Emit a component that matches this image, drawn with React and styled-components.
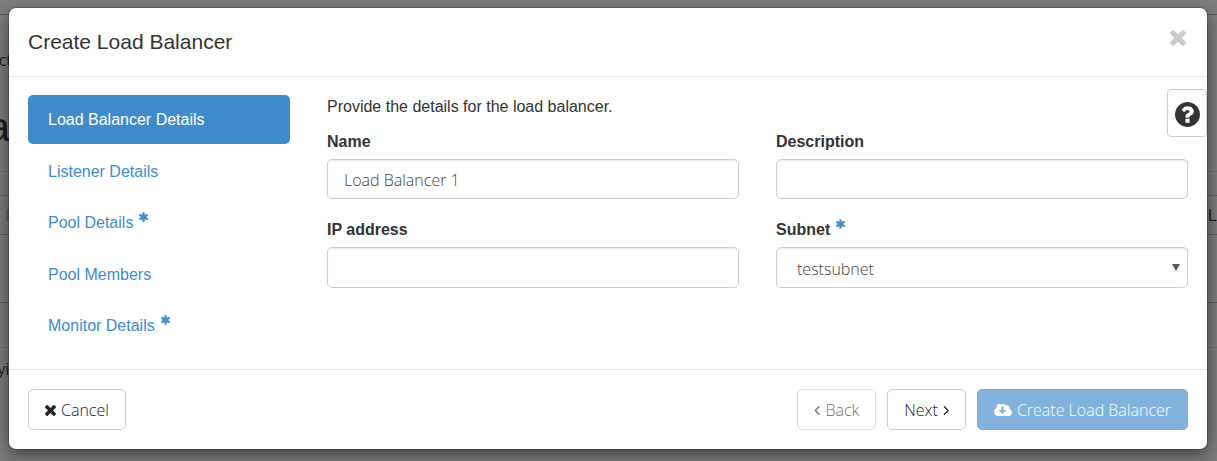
import React, { useState } from "react";
import styled, { createGlobalStyle } from "styled-components";

const ICONS = {
  times: {
    box: "302 366 1188 1188",
    d: "M1490 1322q0 40-28 68l-136 136q-28 28-68 28t-68-28l-294-294-294 294q-28 28-68 28t-68-28l-136-136q-28-28-28-68t28-68l294-294-294-294q-28-28-28-68t28-68l136-136q28-28 68-28t68 28l294 294 294-294q28-28 68-28t68 28l136 136q28 28 28 68t-28 68l-294 294 294 294q28 28 28 68z",
  },
  asterisk: {
    box: "178 128 1436 1536",
    d: "M1546 1050q46 26 59.5 77.5t-12.5 97.5l-64 110q-26 46-77.5 59.5t-97.5-12.5l-266-153v307q0 52-38 90t-90 38h-128q-52 0-90-38t-38-90v-307l-266 153q-46 26-97.5 12.5t-77.5-59.5l-64-110q-26-46-12.5-97.5t59.5-77.5l266-154-266-154q-46-26-59.5-77.5t12.5-97.5l64-110q26-46 77.5-59.5t97.5 12.5l266 153v-307q0-52 38-90t90-38h128q52 0 90 38t38 90v307l266-153q46-26 97.5-12.5t77.5 59.5l64 110q26 46 12.5 97.5t-59.5 77.5l-266 154z",
  },
  question: {
    box: "128 128 1536 1536",
    d: "M1024 1376v-192q0-14-9-23t-23-9h-192q-14 0-23 9t-9 23v192q0 14 9 23t23 9h192q14 0 23-9t9-23zm256-672q0-88-55.5-163t-138.5-116-170-41q-243 0-371 213-15 24 8 42l132 100q7 6 19 6 16 0 25-12 53-68 86-92 34-24 86-24 48 0 85.5 26t37.5 59q0 38-20 61t-68 45q-63 28-115.5 86.5t-52.5 125.5v36q0 14 9 23t23 9h192q14 0 23-9t9-23q0-19 21.5-49.5t54.5-49.5q32-18 49-28.5t46-35 44.5-48 28-60.5 12.5-81zm384 192q0 209-103 385.5t-279.5 279.5-385.5 103-385.5-103-279.5-279.5-103-385.5 103-385.5 279.5-279.5 385.5-103 385.5 103 279.5 279.5 103 385.5z",
  },
  cloud: {
    box: "-64 256 1920 1280",
    d: "M1216 928q0-14-9-23t-23-9h-224v-352q0-13-9.5-22.5t-22.5-9.5h-192q-13 0-22.5 9.5t-9.5 22.5v352h-224q-13 0-22.5 9.5t-9.5 22.5q0 14 9 23l352 352q9 9 23 9t23-9l351-351q10-12 10-24zm640 224q0 159-112.5 271.5t-271.5 112.5h-1088q-185 0-316.5-131.5t-131.5-316.5q0-130 70-240t188-165q-2-30-2-43 0-212 150-362t362-150q156 0 285.5 87t188.5 231q71-62 166-62 106 0 181 75t75 181q0 76-41 138 130 31 213.5 135.5t83.5 238.5z",
  },
  left: {
    box: "571 461 632 998",
    d: "M1203 544q0 13-10 23l-393 393 393 393q10 10 10 23t-10 23l-50 50q-10 10-23 10t-23-10l-466-466q-10-10-10-23t10-23l466-466q10-10 23-10t23 10l50 50q10 10 10 23z",
  },
  right: {
    box: "539 461 632 998",
    d: "M1171 960q0 13-10 23l-466 466q-10 10-23 10t-23-10l-50-50q-10-10-10-23t10-23l393-393-393-393q-10-10-10-23t10-23l50-50q10-10 23-10t23 10l466 466q10 10 10 23z",
  },
};

function Icon({ name, width, height }) {
  return (
    <Glyph
      viewBox={ICONS[name].box}
      width={width}
      height={height}
      aria-hidden="true"
    >
      <path d={ICONS[name].d} />
    </Glyph>
  );
}

function Required() {
  return (
    <Star>
      <Icon name="asterisk" width={9} height={10} />
    </Star>
  );
}

const steps = [
  { label: "Load Balancer Details" },
  { label: "Listener Details" },
  { label: "Pool Details", required: true },
  { label: "Pool Members" },
  { label: "Monitor Details", required: true },
];

export default function App() {
  const [step, setStep] = useState(0);
  const [form, setForm] = useState({
    name: "Load Balancer 1",
    description: "",
    ip: "",
    subnet: "testsubnet",
  });

  function change(event) {
    setForm({ ...form, [event.target.name]: event.target.value });
  }

  return (
    <>
      <GlobalStyle />
      <Page>
        <Backdrop aria-hidden="true">
          <Band $height={15} />
          <Band $height={157} $light>
            <Crumb>ct</Crumb>
            <Heading>a</Heading>
          </Band>
          <Band $height={24} />
          <Band $height={39}>
            <TableRow>
              <Tick />
              <span>L</span>
            </TableRow>
          </Band>
          <Band $height={68} />
          <Band $height={45} $light />
          <Note>yi</Note>
        </Backdrop>
        <Dialog role="dialog" aria-labelledby="title">
          <Header>
            <Title id="title">Create Load Balancer</Title>
            <Close type="button" aria-label="Close">
              <Icon name="times" width={16} height={16} />
            </Close>
          </Header>
          <Body>
            <Steps>
              {steps.map((item, index) => (
                <Step
                  key={item.label}
                  href="#"
                  $active={index === step}
                  onClick={(event) => {
                    event.preventDefault();
                    setStep(index);
                  }}
                >
                  {item.label}
                  {item.required && <Required />}
                </Step>
              ))}
            </Steps>
            <Content>
              <Intro>Provide the details for the load balancer.</Intro>
              <Fields>
                <Field>
                  <Label htmlFor="name">Name</Label>
                  <Input
                    id="name"
                    name="name"
                    value={form.name}
                    onChange={change}
                  />
                </Field>
                <Field>
                  <Label htmlFor="description">Description</Label>
                  <Input
                    id="description"
                    name="description"
                    value={form.description}
                    onChange={change}
                  />
                </Field>
                <Field>
                  <Label htmlFor="ip">IP address</Label>
                  <Input id="ip" name="ip" value={form.ip} onChange={change} />
                </Field>
                <Field>
                  <Label htmlFor="subnet">
                    Subnet
                    <Required />
                  </Label>
                  <SelectWrap>
                    <Select
                      id="subnet"
                      name="subnet"
                      value={form.subnet}
                      onChange={change}
                    >
                      <option>testsubnet</option>
                    </Select>
                    <Caret viewBox="0 0 8 7" width="8" height="7">
                      <path d="M0 0h8L4 7z" />
                    </Caret>
                  </SelectWrap>
                </Field>
              </Fields>
            </Content>
          </Body>
          <Help type="button" aria-label="Help">
            <Icon name="question" width={25} height={25} />
          </Help>
          <Footer>
            <Button type="button">
              <Icon name="times" width={11} height={11} />
              Cancel
            </Button>
            <Actions>
              <Button type="button" disabled>
                <Icon name="left" width={6} height={9} />
                Back
              </Button>
              <Button type="button">
                Next
                <Icon name="right" width={6} height={9} />
              </Button>
              <Button type="button" $primary disabled>
                <Icon name="cloud" width={18} height={12} />
                Create Load Balancer
              </Button>
            </Actions>
          </Footer>
        </Dialog>
      </Page>
    </>
  );
}

const GlobalStyle = createGlobalStyle`
  * {
    box-sizing: border-box;
  }
  body {
    margin: 0;
    background: #7d7d7d;
    color: #333;
    font-family: "Liberation Sans", Arial, sans-serif;
    font-size: 16px;
    line-height: 23px;
  }
`;

const Page = styled.div`
  position: relative;
  min-height: 100vh;
  padding: 8px 10px 12px 9px;
  overflow: hidden;
`;

/* dimmed page that shows round the dialog */
const Backdrop = styled.div`
  position: absolute;
  inset: 0;
  color: #1a1a1a;
`;

const Band = styled.div`
  height: ${(props) => props.$height}px;
  border-bottom: 1px solid ${(props) => (props.$light ? "#6c6c6c" : "#5c5c5c")};
`;

const Crumb = styled.div`
  display: flex;
  justify-content: flex-end;
  width: 12px;
  padding-top: 34px;
  font-family: "Open Sans", sans-serif;
`;

const Heading = styled.div`
  display: flex;
  justify-content: flex-end;
  width: 10px;
  padding-top: 32px;
  font-size: 41px;
  line-height: 47px;
`;

const TableRow = styled.div`
  display: flex;
  align-items: center;
  justify-content: space-between;
  height: 100%;
  padding-left: 6px;
`;

const Tick = styled.span`
  width: 12px;
  height: 12px;
  background: #666;
`;

const Note = styled.div`
  display: flex;
  justify-content: flex-end;
  width: 9px;
  padding-top: 10px;
`;

const Dialog = styled.main`
  position: relative;
  background: #fff;
  border-radius: 7px;
  box-shadow: 0 6px 17px rgba(0, 0, 0, 0.5), 0 0 0 1px rgba(0, 0, 0, 0.2);
`;

const Header = styled.header`
  display: flex;
  align-items: flex-start;
  justify-content: space-between;
  padding: 19px 20px 20px 19px;
  border-bottom: 1px solid #e5e5e5;
`;

const Title = styled.h1`
  margin: 0;
  font-size: 21px;
  font-weight: 400;
  line-height: 29px;
`;

const Glyph = styled.svg`
  flex: none;
  fill: currentColor;
`;

const Close = styled.button`
  display: flex;
  padding: 3px 1px;
  border: 0;
  background: none;
  color: #ccc;
`;

const Body = styled.div`
  display: flex;
  gap: 37px;
  padding: 18px 19px 19px;
`;

const Steps = styled.nav`
  display: flex;
  flex: none;
  flex-direction: column;
  justify-content: space-between;
  width: 262px;
  min-height: 255px;
`;

const Step = styled.a`
  display: flex;
  padding: 13px 20px;
  border-radius: 5px;
  color: ${(props) => (props.$active ? "#fff" : "#428bca")};
  background: ${(props) => (props.$active ? "#428bca" : "transparent")};
  text-decoration: none;
`;

const Star = styled.span`
  display: inline-flex;
  margin-left: 6px;
  padding-top: 1px;
  align-items: flex-start;
  color: #428bca;
`;

const Content = styled.div`
  flex: 1;
`;

const Intro = styled.p`
  margin: 0 0 12px;
`;

const Fields = styled.div`
  display: grid;
  grid-template-columns: 1fr 1fr;
  align-content: start;
  gap: 19px 37px;
`;

const Field = styled.div`
  display: flex;
  flex-direction: column;
  gap: 6px;
`;

const Label = styled.label`
  display: flex;
  font-weight: 700;
`;

const Input = styled.input`
  flex: 1 0 40px;
  width: 100%;
  padding: 6px 16px 4px;
  border: 1px solid #ccc;
  border-radius: 5px;
  background: #fff;
  box-shadow: inset 0 1px 1px rgba(0, 0, 0, 0.08);
  color: #444;
  font-family: "Open Sans", sans-serif;
  font-size: 16px;
  font-weight: 300;
`;

const SelectWrap = styled.div`
  position: relative;
  display: flex;
`;

const Select = styled(Input).attrs({ as: "select" })`
  height: 41px;
  padding: 6px 20px 4px;
  appearance: none;
`;

const Caret = styled.svg`
  position: absolute;
  top: 17px;
  right: 8px;
  fill: #555;
  pointer-events: none;
`;

const Help = styled.button`
  position: absolute;
  top: 81px;
  right: 0;
  display: flex;
  align-items: center;
  justify-content: center;
  width: 40px;
  height: 48px;
  padding: 2px 0 0;
  border: 1px solid #ccc;
  border-radius: 4px;
  background: #fff;
  color: #333;
`;

const Footer = styled.footer`
  display: flex;
  justify-content: space-between;
  padding: 19px;
  border-top: 1px solid #e5e5e5;
`;

const Actions = styled.div`
  display: flex;
  gap: 11px;
`;

const Button = styled.button`
  display: flex;
  align-items: center;
  gap: 5px;
  height: 41px;
  padding: 1px 16px 0;
  border: 1px solid ${(props) => (props.$primary ? "#357ebd" : "#ccc")};
  border-radius: 5px;
  background: ${(props) => (props.$primary ? "#428bca" : "#fff")};
  color: ${(props) => (props.$primary ? "#fff" : "#222")};
  font-family: "Open Sans", sans-serif;
  font-size: 16px;
  font-weight: 300;

  &:disabled {
    opacity: 0.65;
  }
`;
